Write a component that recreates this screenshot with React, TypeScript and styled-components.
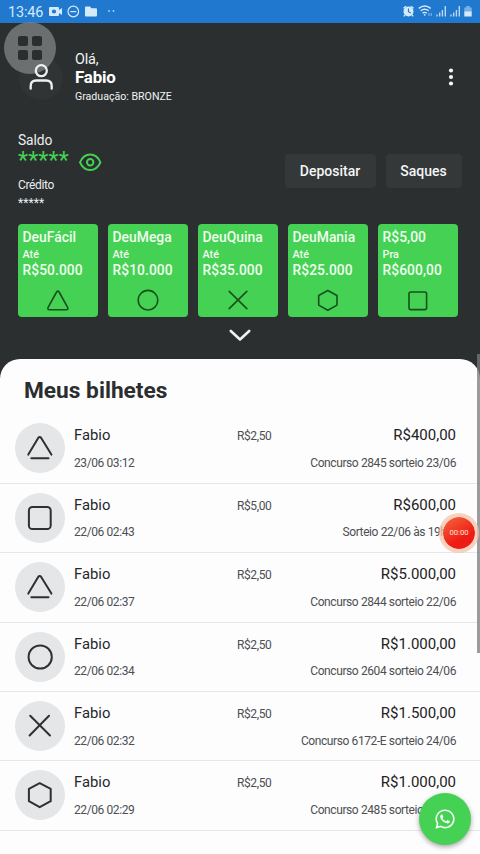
import React from "react";
import styled, { createGlobalStyle } from "styled-components";
import { FaWhatsapp } from "react-icons/fa";

const Global = createGlobalStyle`
  * { box-sizing: border-box; }
  html, body { margin: 0; padding: 0; background: #2b2f30; }
  body { width: 480px; height: 854px; overflow: hidden; font-family: Roboto, "Noto Sans", sans-serif; }
`;

const Screen = styled.div`
  position: relative;
  width: 480px;
  height: 854px;
  overflow: hidden;
  display: flex;
  flex-direction: column;
  background: #2b2f30;
`;

const StatusBar = styled.div`
  flex: none;
  height: 23px;
  padding: 0 7px 0 8px;
  display: flex;
  align-items: center;
  justify-content: space-between;
  background: #2079cf;
  color: #d3e9fc;
`;

const StatusGroup = styled.div`
  display: flex;
  align-items: center;
  height: 23px;
`;

const Clock = styled.span`
  font-size: 14.4px;
  line-height: 23px;
  width: 40px;
  padding-top: 1px;
  letter-spacing: -0.1px;
`;

const Header = styled.header`
  flex: none;
  display: flex;
  height: 84px;
  padding: 27px 18px 0 19px;
`;

const Avatar = styled.div`
  width: 44px;
  height: 44px;
  margin-top: 6px;
  border-radius: 50%;
  background: #303435;
  display: flex;
  align-items: center;
  justify-content: center;
`;

const PersonIcon = styled.svg`
  position: relative;
  z-index: 2;
`;

const Greeting = styled.div`
  flex: 1;
  margin-left: 12px;
  color: #f1f3f3;
`;

const Hello = styled.div`
  font-size: 14.4px;
  line-height: 19px;
  letter-spacing: -0.2px;
`;

const UserName = styled.div`
  font-size: 16.9px;
  font-weight: 700;
  line-height: 17px;
  letter-spacing: -0.2px;
  color: #fff;
`;

const Rank = styled.div`
  font-size: 10.6px;
  line-height: 21px;
`;

const MenuButton = styled.button`
  width: 22px;
  height: 54px;
  padding: 0;
  border: 0;
  background: none;
  display: flex;
  align-items: center;
  justify-content: center;
`;

const Funds = styled.section`
  flex: none;
  display: flex;
  justify-content: space-between;
  height: 117px;
  padding: 24px 18px 0;
  color: #eceeee;
`;

const BalanceLabel = styled.div`
  font-size: 13.8px;
  line-height: 18px;
  letter-spacing: -0.1px;
`;

const Balance = styled.div`
  display: flex;
  height: 25px;
  align-items: center;
`;

const BalanceValue = styled.span`
  width: 60px;
  height: 25px;
  font-size: 23.4px;
  line-height: 22px;
  letter-spacing: 0.1px;
  color: #45d153;
`;

const CreditLabel = styled.div`
  margin-top: 1px;
  font-size: 12px;
  line-height: 20px;
  letter-spacing: -0.35px;
`;

const CreditValue = styled.div`
  font-size: 12px;
  line-height: 16px;
  letter-spacing: 0.1px;
`;

const Actions = styled.div`
  display: flex;
  gap: 10px;
  padding-top: 23px;
`;

const ActionButton = styled.button<{ $w: number }>`
  width: ${(p) => p.$w}px;
  height: 34px;
  padding: 0 1px 0 0;
  border: 0;
  border-radius: 4px;
  background: #353839;
  color: #f4f5f5;
  font: 500 14px/34px Roboto, sans-serif;
`;

const Games = styled.section`
  flex: none;
  display: flex;
  gap: 10px;
  padding-left: 18px;
  height: 93px;
`;

const GameCard = styled.div`
  width: 80px;
  height: 93px;
  padding: 4px 0 0 4.5px;
  border-radius: 4px;
  background: #45d153;
  color: #f0fdf0;
  font-weight: 500;
  white-space: nowrap;
`;

const GameTitle = styled.div`
  font-size: 13.9px;
  line-height: 18px;
`;

const GameHint = styled.div`
  font-size: 10.8px;
  line-height: 17px;
`;

const GamePrize = styled.div`
  font-size: 13.8px;
  line-height: 14px;
  letter-spacing: 0.08px;
`;

const GameIcon = styled.div`
  margin: 11px 4.5px 0 0;
  display: flex;
  justify-content: center;
  color: #17501f;
`;

const Expand = styled.div`
  flex: none;
  height: 42px;
  display: flex;
  justify-content: center;
  padding-top: 11px;
`;

const Sheet = styled.main`
  flex: 1;
  min-height: 0;
  overflow: hidden;
  border-radius: 20px 20px 0 0;
  background: #fdfdfe;
  color: #26282a;
`;

const SheetTitle = styled.h1`
  margin: 0;
  padding: 17px 0 0 24px;
  height: 55.4px;
  font-size: 22.7px;
  line-height: 30px;
  font-weight: 700;
  color: #2b2d2f;
`;

const TicketRow = styled.article`
  display: grid;
  grid-template-columns: 74px 1fr auto;
  height: 69.4px;
  padding-right: 24px;
  border-bottom: 1.4px solid #e6e7ea;
`;

const TicketIcon = styled.div`
  width: 50px;
  height: 50px;
  margin: 9px 0 0 15px;
  border-radius: 50%;
  background: #e5e6e8;
  display: flex;
  align-items: center;
  justify-content: center;
  color: #2e3032;
`;

const TicketMain = styled.div`
  padding-top: 11.6px;
`;

const TicketTop = styled.div`
  display: flex;
  align-items: center;
  height: 19px;
`;

const Owner = styled.span`
  width: 163px;
  font-size: 14.8px;
`;

const SmallText = styled.span`
  font-size: 12px;
  letter-spacing: -0.4px;
  color: #4d4f52;
  line-height: 20px;
  white-space: nowrap;
`;

const Stake = styled(SmallText)`
  padding-top: 2px;
`;

const TicketDetail = styled.div`
  height: 36px;
  padding-top: 8px;
  display: flex;
`;

const TicketSide = styled(TicketMain)`
  display: flex;
  flex-direction: column;
  align-items: flex-end;
  margin-left: -120px;
`;

const Prize = styled.span`
  font-size: 15px;
  color: #1f2123;
`;

const AssistBubble = styled.div`
  position: absolute;
  left: 4px;
  top: 22px;
  width: 52px;
  height: 52px;
  border-radius: 50%;
  background: rgba(133, 136, 136, 0.72);
  display: flex;
  align-items: center;
  justify-content: center;
`;

const BubbleGrid = styled.div`
  display: grid;
  grid-template-columns: 10px 10px;
  grid-auto-rows: 10px;
  gap: 4px;
`;

const BubbleCell = styled.i`
  border-radius: 2px;
  background: #2a2e2f;
`;

const Recorder = styled.div`
  position: absolute;
  left: 439px;
  top: 513px;
  width: 40px;
  height: 40px;
  border-radius: 50%;
  border: 4px solid rgba(247, 195, 170, 0.75);
  background: linear-gradient(150deg, #f4683c, #ee1c14 65%) padding-box;
  color: #ffe4dc;
  font-size: 7.6px;
  line-height: 32px;
  text-align: center;
`;

const WhatsButton = styled.div`
  position: absolute;
  left: 419px;
  top: 793px;
  width: 52px;
  height: 52px;
  border-radius: 50%;
  background: #45d153;
  box-shadow: 0 2px 5px rgba(0, 0, 0, 0.35);
  color: #f3fff3;
  display: flex;
  align-items: center;
  justify-content: center;
`;

const ScrollThumb = styled.div`
  position: absolute;
  right: 0;
  top: 354px;
  width: 3px;
  height: 299px;
  background: rgba(120, 123, 126, 0.75);
`;

type Shape = "triangle" | "square" | "circle" | "cross" | "hexagon";

function GameShape({ shape }: { shape: Shape }) {
  return (
    <svg width="24" height="24" viewBox="0 0 24 24" fill="none" stroke="currentColor" strokeWidth="1.6" strokeLinejoin="round" strokeLinecap="round">
      {shape === "triangle" && <path d="M10.6 4 2.2 19.2Q1.1 21.7 3.5 21.7H20.3Q22.7 21.7 21.5 19.2L13.1 4Q11.9 2.2 10.6 4Z" />}
      {shape === "circle" && <circle cx="12" cy="12.2" r="9.8" />}
      {shape === "cross" && <path d="m3.2 3.4 17.6 17.2M20.8 3.4 3.2 20.6" />}
      {shape === "hexagon" && <path d="M11.8 2.5 21 7.5V17.1L11.8 22.2 2.7 17.1V7.5Z" />}
      {shape === "square" && <rect x="3" y="4" width="17.6" height="17.6" rx="1.8" />}
    </svg>
  );
}

function TicketShape({ shape }: { shape: Shape }) {
  return (
    <svg width="30" height="30" viewBox="0 0 30 30" fill="none" stroke="currentColor" strokeWidth="2" strokeLinejoin="round" strokeLinecap="round">
      {shape === "triangle" && (
        <>
          <path d="M3.3 21.6 13.2 4.9Q14.7 3 16.2 4.9L26.4 21.6" />
          <path d="M6.3 25.2H23.5" />
        </>
      )}
      {shape === "circle" && <circle cx="15.2" cy="15" r="11.6" />}
      {shape === "cross" && <path d="m5.2 4.7 19.8 19.8M24 4.7 4.6 24.5" />}
      {shape === "hexagon" && <path d="M14.7 3.2 25.7 8.8V21.2L14.7 27.2 3.9 21.2V8.8Z" />}
      {shape === "square" && <rect x="3.9" y="4" width="21.8" height="22" rx="3.6" />}
    </svg>
  );
}

const games: { title: string; hint: string; prize: string; shape: Shape }[] = [
  { title: "DeuFácil", hint: "Até", prize: "R$50.000", shape: "triangle" },
  { title: "DeuMega", hint: "Até", prize: "R$10.000", shape: "circle" },
  { title: "DeuQuina", hint: "Até", prize: "R$35.000", shape: "cross" },
  { title: "DeuMania", hint: "Até", prize: "R$25.000", shape: "hexagon" },
  { title: "R$5,00", hint: "Pra", prize: "R$600,00", shape: "square" },
];

const tickets: { shape: Shape; date: string; stake: string; prize: string; draw: string }[] = [
  { shape: "triangle", date: "23/06 03:12", stake: "R$2,50", prize: "R$400,00", draw: "Concurso 2845 sorteio 23/06" },
  { shape: "square", date: "22/06 02:43", stake: "R$5,00", prize: "R$600,00", draw: "Sorteio 22/06 às 19hrs" },
  { shape: "triangle", date: "22/06 02:37", stake: "R$2,50", prize: "R$5.000,00", draw: "Concurso 2844 sorteio 22/06" },
  { shape: "circle", date: "22/06 02:34", stake: "R$2,50", prize: "R$1.000,00", draw: "Concurso 2604 sorteio 24/06" },
  { shape: "cross", date: "22/06 02:32", stake: "R$2,50", prize: "R$1.500,00", draw: "Concurso 6172-E sorteio 24/06" },
  { shape: "hexagon", date: "22/06 02:29", stake: "R$2,50", prize: "R$1.000,00", draw: "Concurso 2485 sorteio 24/06" },
];

export default function App() {
  return (
    <>
      <Global />
      <Screen>
        <StatusBar>
          <StatusGroup>
            <Clock>13:46</Clock>
            <svg width="70" height="23" viewBox="48 0 70 23" fill="currentColor">
              <path fillRule="evenodd" d="M50 7h8q1 0 1 1v2l3-2v7l-3-2v2q0 1-1 1h-8q-1 0-1-1V8q0-1 1-1Zm4 2.4a2.1 2.1 0 1 0 0 4.2 2.1 2.1 0 0 0 0-4.2Z" />
              <circle cx="73.3" cy="11.5" r="5.3" fill="none" stroke="currentColor" strokeWidth="1.2" />
              <path d="M70.3 11h6v1.2h-6z" />
              <path d="M86 6.4h4l1.4 1.8H96q1 0 1 1V15.5q0 1-1 1H86q-1 0-1-1V7.4q0-1 1-1Z" />
              <circle cx="109" cy="11" r=".9" opacity=".8" />
              <circle cx="113.5" cy="11" r=".9" opacity=".8" />
            </svg>
          </StatusGroup>
          <StatusGroup>
            <svg width="72" height="23" viewBox="401 0 72 23" fill="currentColor">
              <path fillRule="evenodd" d="M408.5 6.4a5 5 0 1 1 0 10 5 5 0 0 1 0-10Zm-.6 2v3.5l2.7 1.6.5-.9-2.1-1.2v-3Z" />
              <path d="M403.500 8.300 406 6.200M413.500 8.300 411 6.200M405 15l-1.200 1.400M412 15l1.200 1.400" stroke="currentColor" strokeWidth="1.3" />
              <g fill="none" stroke="currentColor" strokeWidth="1.4">
                <path d="M418.700 8.400q6-4.800 12 0M420.700 10.800q4-3.100 8 0M422.500 13.200q2.200-1.700 4.400 0" />
              </g>
              <circle cx="424.7" cy="14.8" r=".9" />
              <path d="M429 16v-3M431.200 13v3" stroke="currentColor" opacity=".6" />
              <path d="M437 16.500v-2M439.700 16.500v-4M442.400 16.500v-6.500M445.300 16.500v-10.500M451 16.500v-2M453.700 16.500v-4M456.400 16.500v-6.500M459.300 16.500v-10.500" stroke="currentColor" strokeWidth="1.4" opacity=".85" />
              <path d="M466.300 6h3.400v1.500h2v5h-7.400v-5h2Z" opacity=".5" />
              <path d="M464.300 11.500h7.400v5h-7.400z" />
            </svg>
          </StatusGroup>
        </StatusBar>

        <Header>
          <Avatar>
            <PersonIcon width="28" height="30" viewBox="0 0 28 30" fill="none" stroke="#eff1f1" strokeWidth="2.3" strokeLinecap="round">
              <circle cx="14.3" cy="7.7" r="5.5" />
              <path d="M3.7 25.7V23q0-5.5 5.5-5.5h10q5.5 0 5.5 5.5v2.7" />
            </PersonIcon>
          </Avatar>
          <Greeting>
            <Hello>Olá,</Hello>
            <UserName>Fabio</UserName>
            <Rank>Graduação: BRONZE</Rank>
          </Greeting>
          <MenuButton>
            <svg width="6" height="20" viewBox="0 0 6 20" fill="#f5f6f6">
              <circle cx="3" cy="3.5" r="2.1" />
              <circle cx="3" cy="10" r="2.1" />
              <circle cx="3" cy="16.5" r="2.1" />
            </svg>
          </MenuButton>
        </Header>

        <Funds>
          <div>
            <BalanceLabel>Saldo</BalanceLabel>
            <Balance>
              <BalanceValue>*****</BalanceValue>
              <svg width="24" height="20" viewBox="0 0 24 20" fill="none" stroke="#45d153" strokeWidth="2" strokeLinejoin="round">
                <path d="M2 10.3Q5.5 2.6 12.2 2.6T22.4 10.3Q19 18 12.2 18T2 10.3Z" />
                <circle cx="12.2" cy="10.3" r="3.2" />
              </svg>
            </Balance>
            <CreditLabel>Crédito</CreditLabel>
            <CreditValue>*****</CreditValue>
          </div>
          <Actions>
            <ActionButton $w={91}>Depositar</ActionButton>
            <ActionButton $w={76}>Saques</ActionButton>
          </Actions>
        </Funds>

        <Games>
          {games.map((g) => (
            <GameCard key={g.title}>
              <GameTitle>{g.title}</GameTitle>
              <GameHint>{g.hint}</GameHint>
              <GamePrize>{g.prize}</GamePrize>
              <GameIcon>
                <GameShape shape={g.shape} />
              </GameIcon>
            </GameCard>
          ))}
        </Games>

        <Expand>
          <svg width="24" height="14" viewBox="0 0 24 14" fill="none" stroke="#f0f2f2" strokeWidth="2.6" strokeLinecap="round" strokeLinejoin="round">
            <path d="m2.8 3 9.2 8.5L21.2 3" />
          </svg>
        </Expand>

        <Sheet>
          <SheetTitle>Meus bilhetes</SheetTitle>
          {tickets.map((t) => (
            <TicketRow key={t.date}>
              <TicketIcon>
                <TicketShape shape={t.shape} />
              </TicketIcon>
              <TicketMain>
                <TicketTop>
                  <Owner>Fabio</Owner>
                  <Stake>{t.stake}</Stake>
                </TicketTop>
                <TicketDetail>
                  <SmallText>{t.date}</SmallText>
                </TicketDetail>
              </TicketMain>
              <TicketSide>
                <TicketTop>
                  <Prize>{t.prize}</Prize>
                </TicketTop>
                <TicketDetail>
                  <SmallText>{t.draw}</SmallText>
                </TicketDetail>
              </TicketSide>
            </TicketRow>
          ))}
        </Sheet>

        <ScrollThumb />
        <AssistBubble>
          <BubbleGrid>
            <BubbleCell />
            <BubbleCell />
            <BubbleCell />
            <BubbleCell />
          </BubbleGrid>
        </AssistBubble>
        <Recorder>00:00</Recorder>
        <WhatsButton>
          <FaWhatsapp size={22} />
        </WhatsButton>
      </Screen>
    </>
  );
}
